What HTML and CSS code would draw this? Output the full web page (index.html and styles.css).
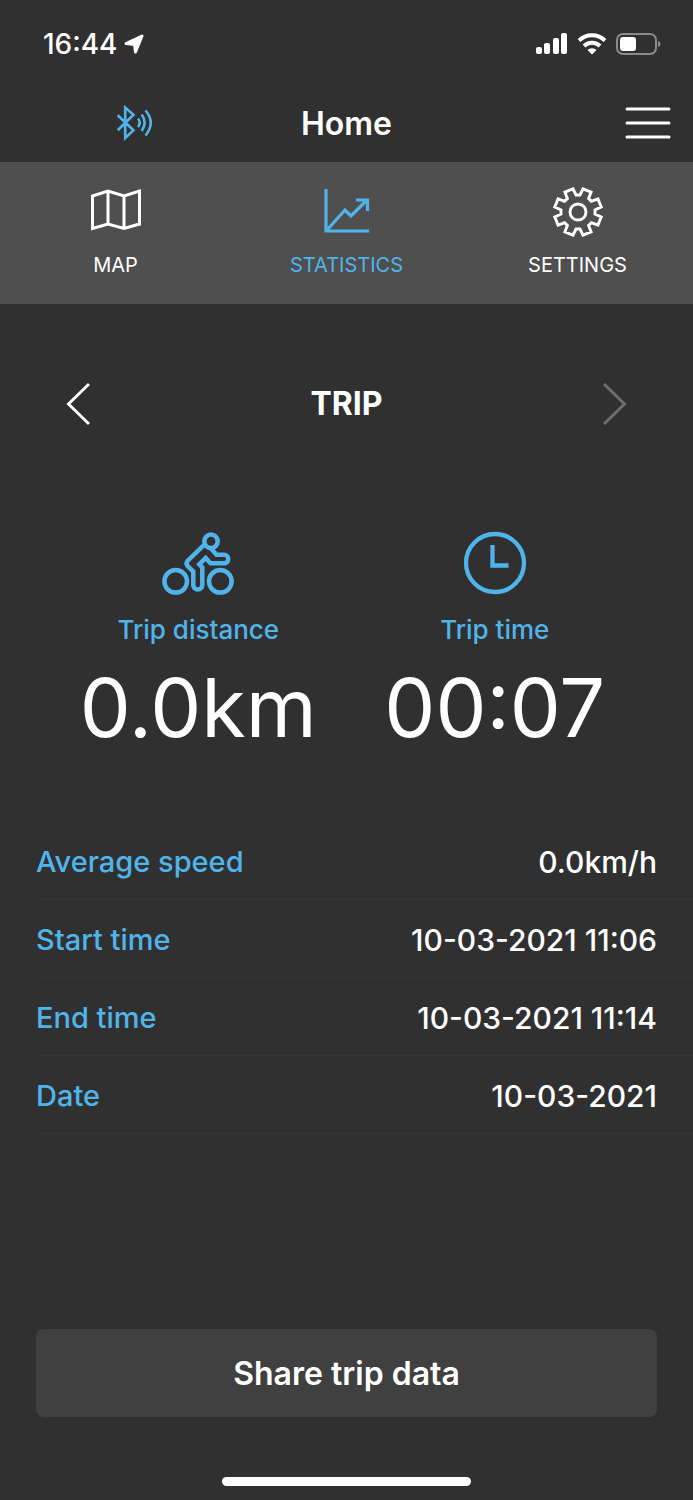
FILE: index.html
```
<!DOCTYPE html>
<html lang="en">
<head>
    <meta charset="utf-8">
    <meta name="viewport" content="width=device-width, initial-scale=1">
    <title>Home</title>
    <link rel="stylesheet" href="styles.css">
</head>
<body>
    <div class="status-bar">
        <div class="status-time">
            <span>16:44</span>
            <svg width="20" height="20" viewBox="0 0 20 20" fill="currentColor" stroke="currentColor" stroke-linejoin="round">
                <path d="M2 9.500 L18 2 L11.500 18 L10.500 10.500 Z" stroke-width="3"/>
            </svg>
        </div>
        <div class="status-icons">
            <svg width="32" height="22" viewBox="0 0 32 22" fill="currentColor">
                <rect x="0" y="14" width="6" height="7" rx="2"/>
                <rect x="8" y="10" width="6" height="11" rx="2"/>
                <rect x="17" y="5" width="6" height="16" rx="2"/>
                <rect x="25" y="0" width="6" height="21" rx="2"/>
            </svg>
            <svg width="30" height="22" viewBox="0 0 30 22" fill="none" stroke="currentColor" stroke-width="4">
                <path d="M2 7.500 A18.500 18.500 0 0 1 28 7.500"/>
                <path d="M7 13 A11.500 11.500 0 0 1 23 13"/>
                <path d="M10.500 17 A6.500 6.500 0 0 1 19.500 17 L15 21.500 Z" fill="currentColor" stroke="none"/>
            </svg>
            <svg width="45" height="22" viewBox="0 0 45 22">
                <rect x="1" y="1" width="39" height="20" rx="6" fill="none" stroke="#8b8b8b" stroke-width="2"/>
                <rect x="4" y="4" width="16" height="14" rx="3" fill="#fff"/>
                <path d="M42 8 Q44.500 8.500 44.500 11 Q44.500 13.500 42 14 Z" fill="#8b8b8b"/>
            </svg>
        </div>
    </div>

    <header class="header">
        <button class="icon-button bluetooth" aria-label="Bluetooth">
            <svg width="38" height="40" viewBox="0 0 38 40" fill="none" stroke="currentColor" stroke-width="2.600">
                <path d="M2.700 12.300 L18.500 27.300 L10.200 35 L10.200 4.500 L18.500 11.700 L2.700 27.300"/>
                <path d="M23 15.500 Q26.500 19.700 23 24"/>
                <path d="M26.700 11.500 Q32.500 19.700 26.700 28"/>
                <path d="M30.500 7.500 Q41 19.700 30.500 32.500"/>
            </svg>
        </button>
        <h1>Home</h1>
        <button class="icon-button menu" aria-label="Menu">
            <svg width="46" height="32" viewBox="0 0 46 32" stroke="currentColor" stroke-width="3" stroke-linecap="round">
                <path d="M2 2 H44 M2 16 H44 M2 30 H44"/>
            </svg>
        </button>
    </header>

    <nav class="tabs">
        <a href="#map" class="tab">
            <svg width="52" height="50" viewBox="0 0 52 50" fill="none" stroke="currentColor" stroke-width="3">
                <path d="M2.500 9 L18 4 L34 9 L49.500 4 V37 L34 41.500 L18 37 L2.500 41.500 Z M18 4 V37 M34 9 V41"/>
            </svg>
            <span>MAP</span>
        </a>
        <a href="#statistics" class="tab active">
            <svg width="48" height="50" viewBox="0 0 48 50" fill="none" stroke="currentColor" stroke-width="3.200">
                <path d="M3 2 V44 H46"/>
                <path d="M4 43 L22 23 L28 29 L44 13"/>
                <path d="M33 13 H44.500 V24"/>
            </svg>
            <span>STATISTICS</span>
        </a>
        <a href="#settings" class="tab">
            <svg width="52" height="50" viewBox="-26 -25 52 50" fill="none" stroke="currentColor" stroke-width="2.900">
                <circle cx="0" cy="0" r="8"/>
                <path d="M2 -17 L5 -23.200 L13.100 -19.900 L10.600 -13.400 L13.400 -10.600 L19.900 -13.100 L23.200 -5 L17 -2
                    L17 2 L23.200 5 L19.900 13.100 L13.400 10.600 L10.600 13.400 L13.100 19.900 L5 23.200 L2 17
                    L-2 17 L-5 23.200 L-13.100 19.900 L-10.600 13.400 L-13.400 10.600 L-19.900 13.100 L-23.200 5 L-17 2
                    L-17 -2 L-23.200 -5 L-19.900 -13.100 L-13.400 -10.600 L-10.600 -13.400 L-13.100 -19.900 L-5 -23.200 L-2 -17 Z"/>
            </svg>
            <span>SETTINGS</span>
        </a>
    </nav>

    <main class="content">
        <div class="pager">
            <button class="icon-button" aria-label="Previous">
                <svg width="26" height="44" viewBox="0 0 26 44" fill="none" stroke="currentColor" stroke-width="2.900">
                    <path d="M23 2 L2.500 22 L23 42"/>
                </svg>
            </button>
            <h2>TRIP</h2>
            <button class="icon-button" aria-label="Next" disabled>
                <svg width="26" height="44" viewBox="0 0 26 44" fill="none" stroke="currentColor" stroke-width="2.900">
                    <path d="M3 2 L23.500 22 L3 42"/>
                </svg>
            </button>
        </div>

        <div class="summary">
            <div class="summary-item">
                <svg width="76" height="66" viewBox="0 0 76 66" fill="none" stroke="currentColor" stroke-width="4.500">
                    <circle cx="15.700" cy="51.300" r="11.300"/>
                    <circle cx="60.300" cy="51.300" r="11.300"/>
                    <circle cx="51" cy="11.300" r="6.700"/>
                    <path d="M45 14 L27.500 31 Q25.500 33.500 28 36.500 L33.300 41.500 V55 A4.500 4.500 0 0 0 42.300 55 V37.500 L39.300 34.300 L45.700 28 L50.500 33.300 H64 A4.300 4.300 0 0 0 64 24.700 H56.500 L50.500 18"/>
                </svg>
                <h3>Trip distance</h3>
                <p>0.0km</p>
            </div>
            <div class="summary-item">
                <svg width="64" height="66" viewBox="0 0 64 66" fill="none" stroke="currentColor" stroke-width="4.300">
                    <circle cx="32" cy="33" r="29"/>
                    <path d="M29.500 15 V35.500 H45.500"/>
                </svg>
                <h3>Trip time</h3>
                <p>00:07</p>
            </div>
        </div>

        <dl class="details">
            <div class="detail-row">
                <dt>Average speed</dt>
                <dd>0.0km/h</dd>
            </div>
            <div class="detail-row">
                <dt>Start time</dt>
                <dd>10-03-2021 11:06</dd>
            </div>
            <div class="detail-row">
                <dt>End time</dt>
                <dd>10-03-2021 11:14</dd>
            </div>
            <div class="detail-row">
                <dt>Date</dt>
                <dd>10-03-2021</dd>
            </div>
        </dl>
    </main>

    <footer class="footer">
        <button class="share-button">Share trip data</button>
        <div class="home-indicator"></div>
    </footer>
</body>
</html>
```
FILE: styles.css
```
* {
    box-sizing: border-box;
}

body {
    display: flex;
    flex-direction: column;
    min-height: 100vh;
    margin: 0;
    font-family: Inter, "Liberation Sans", sans-serif;
    background-color: #303030;
    color: #fff;
}

h1, h2, h3, p, dl, dd {
    margin: 0;
}

svg {
    display: block;
}

.status-bar {
    display: flex;
    justify-content: space-between;
    align-items: center;
    height: 88px;
    padding: 0 32px 0 43px;
}

.status-time {
    display: flex;
    align-items: center;
    gap: 6px;
    font-size: 28px;
    font-weight: 500;
}

.status-icons {
    display: flex;
    gap: 9px;
}

.header {
    display: grid;
    grid-template-columns: 1fr auto 1fr;
    align-items: center;
    height: 74px;
    padding: 0 22px 4px;
}

.header h1 {
    font-size: 32px;
    font-weight: 600;
}

.icon-button {
    padding: 0;
    border: none;
    background: none;
    color: #fff;
    cursor: pointer;
}

.icon-button:disabled {
    color: #6f6f6f;
    cursor: default;
}

.bluetooth {
    justify-self: start;
    margin-left: 93px;
    color: #50b4eb;
}

.menu {
    justify-self: end;
}

.tabs {
    display: grid;
    grid-template-columns: repeat(3, 1fr);
    height: 142px;
    background-color: #4f4f4f;
}

.tab {
    display: flex;
    flex-direction: column;
    align-items: center;
    gap: 16px;
    padding-top: 25px;
    font-size: 20px;
    line-height: 24px;
    color: #fff;
    text-decoration: none;
}

.tab.active {
    color: #50b4eb;
}

.content {
    flex: 1;
}

.pager {
    display: flex;
    justify-content: space-between;
    align-items: center;
    padding: 76px 66px 0;
}

.pager h2 {
    font-size: 32px;
    line-height: 48px;
    font-weight: 700;
}

.summary {
    display: grid;
    grid-template-columns: 1fr 1fr;
    padding: 102px 50px 0;
}

.summary-item {
    display: flex;
    flex-direction: column;
    align-items: center;
    color: #50b4eb;
}

.summary-item h3 {
    margin-top: 16px;
    font-size: 26px;
    line-height: 36px;
    font-weight: 500;
}

.summary-item p {
    font-size: 81px;
    line-height: 120px;
    color: #fff;
}

.details {
    margin-top: 54px;
    padding-left: 36px;
}

.detail-row {
    display: flex;
    justify-content: space-between;
    align-items: center;
    height: 78px;
    padding: 2px 36px 0 0;
    border-bottom: 1px solid #373737;
    font-size: 29px;
    font-weight: 500;
}

.detail-row dt {
    color: #50b4eb;
}

.detail-row dd {
    font-size: 30px;
}

.footer {
    padding: 0 36px 14px;
}

.share-button {
    display: block;
    width: 100%;
    height: 88px;
    border: none;
    border-radius: 8px;
    background-color: #404040;
    color: #fff;
    font-family: inherit;
    font-size: 32px;
    font-weight: 600;
    cursor: pointer;
}

.home-indicator {
    width: 40%;
    height: 9px;
    margin: 60px auto 0;
    border-radius: 5px;
    background-color: #fff;
}
```
